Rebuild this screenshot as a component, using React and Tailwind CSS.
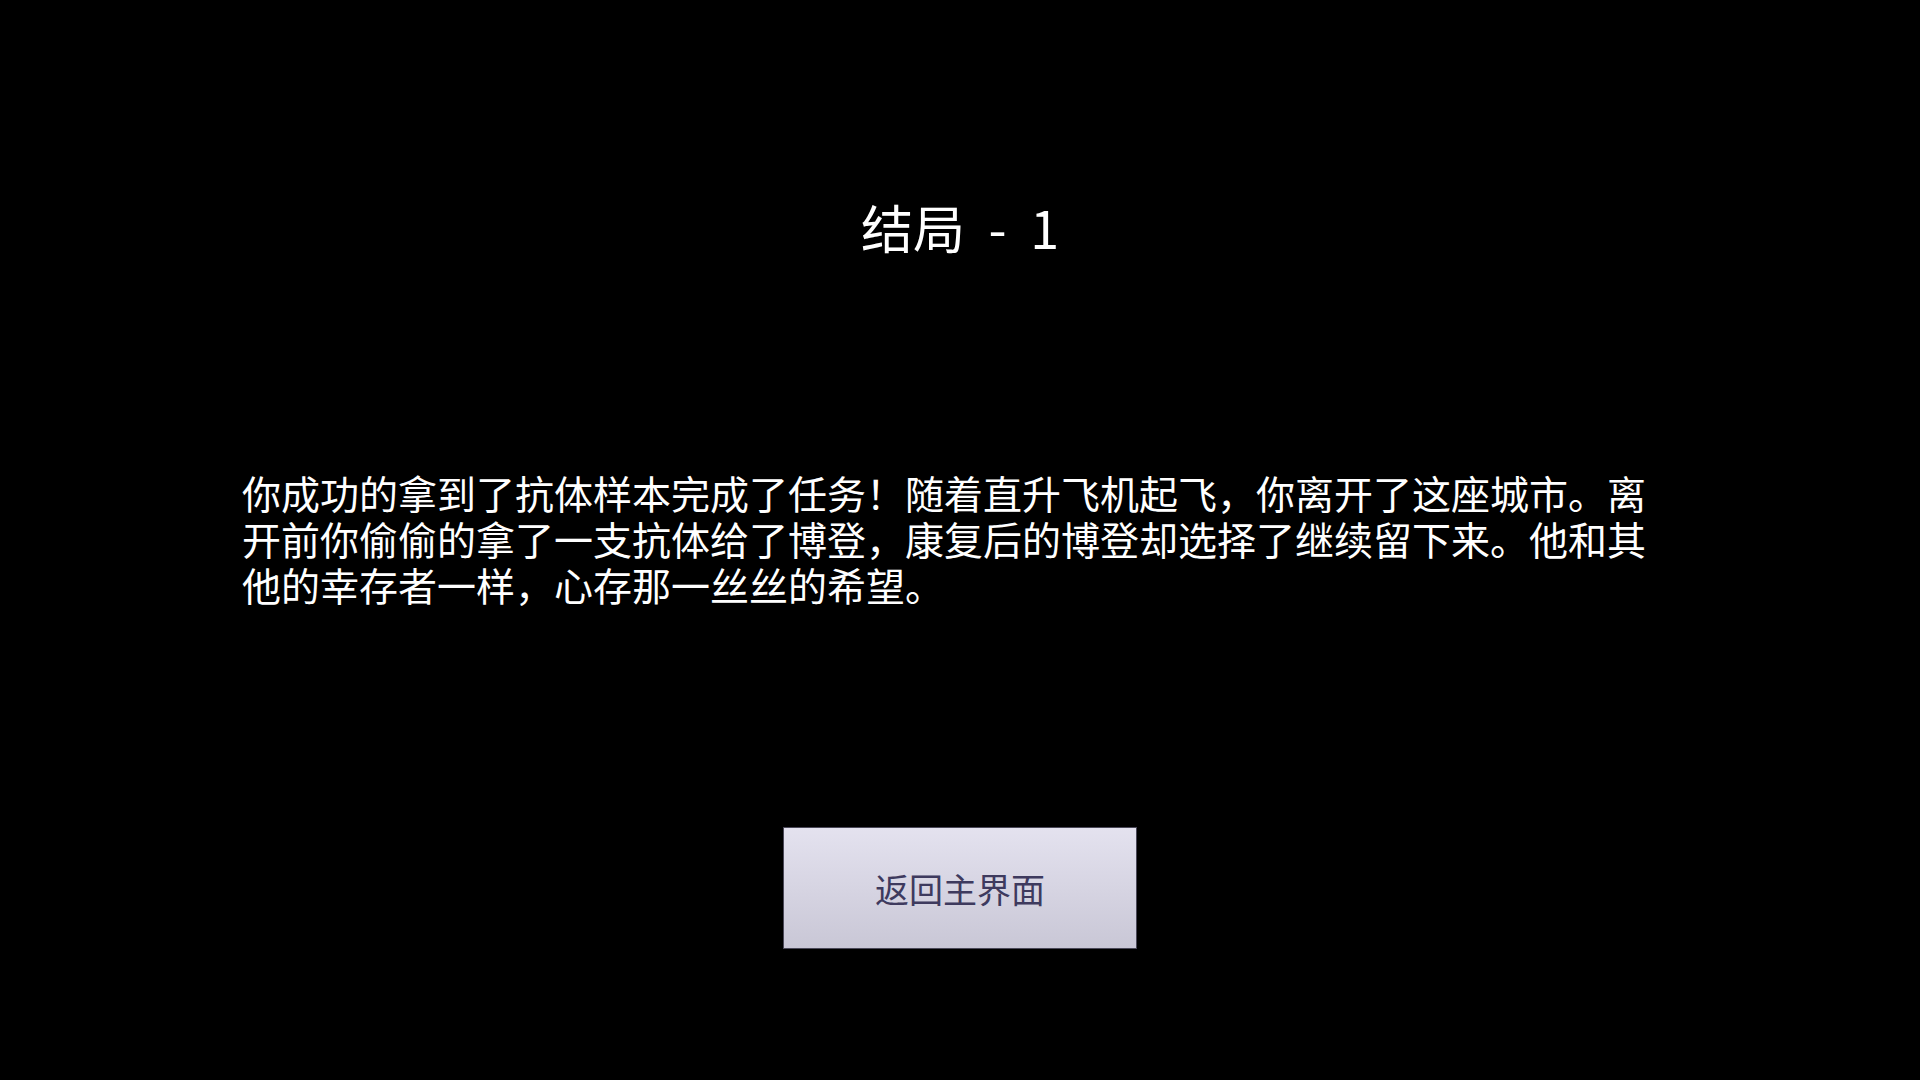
export default function App() {
  return (
    <div
      className="min-h-screen w-full bg-black flex flex-col items-center pt-[201px] text-white"
      style={{ fontFamily: '"Noto Sans CJK SC", "Noto Sans", sans-serif' }}
    >
      <h1 className="text-[52px] leading-[52px] font-normal [word-spacing:12px]">结局 - 1</h1>
      <p className="mt-[216px] w-[1436px] text-[39px] leading-[46px]">
        你成功的拿到了抗体样本完成了任务！随着直升飞机起飞，你离开了这座城市。离开前你偷偷的拿了一支抗体给了博登，康复后的博登却选择了继续留下来。他和其他的幸存者一样，心存那一丝丝的希望。
      </p>
      <button className="mt-[220px] w-[354px] h-[122px] border border-[#4a4858] bg-gradient-to-b from-[#e4e2ef] to-[#c9c7d6] text-[34px] text-[#3e3a5e]">
        返回主界面
      </button>
    </div>
  );
}
